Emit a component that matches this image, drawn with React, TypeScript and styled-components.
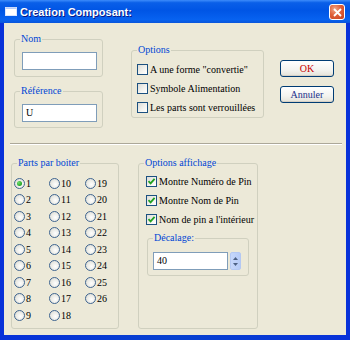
import React from "react";
import styled, { createGlobalStyle } from "styled-components";

const Global = createGlobalStyle`
  html, body { margin: 0; padding: 0; background: #ffffff; }
  * { box-sizing: border-box; }
`;

const Window = styled.div`
  width: 350px;
  height: 340px;
  display: flex;
  flex-direction: column;
  background: linear-gradient(to right, #0831d9, #0842d0 50%, #0831d9);
  overflow: hidden;
`;

const TitleBar = styled.div`
  height: 23px;
  flex: none;
  display: flex;
  align-items: center;
  padding: 0 5px 0 5px;
  background: linear-gradient(
    to bottom,
    #3d8cfb 0%,
    #0a5fe8 12%,
    #0055e5 45%,
    #0762f0 85%,
    #0a55da 100%
  );
`;

const TitleText = styled.span`
  margin-left: 3px;
  font-family: "Liberation Sans", Arial, sans-serif;
  font-weight: bold;
  font-size: 11px;
  color: #ffffff;
  text-shadow: 1px 1px 0 #0a1883;
  flex: 1;
`;

const CloseButton = styled.div`
  width: 16px;
  height: 16px;
  margin-top: 1px;
  border: 1px solid #ffffff;
  border-radius: 3px;
  background: radial-gradient(circle at 35% 30%, #f0a88a 0%, #e0603a 45%, #c4401e 100%);
  display: flex;
  align-items: center;
  justify-content: center;
`;

const Content = styled.div`
  flex: 1;
  margin: 0 4px 5px 4px;
  background: #ece9d8;
  font-family: "Liberation Serif", "Times New Roman", serif;
  font-size: 10px;
  color: #000000;
`;

const TopRow = styled.div`
  display: flex;
  align-items: flex-start;
  padding: 16px 0 0 10px;
`;

const Column = styled.div<{ $gap: number; $ml?: number; $mt?: number }>`
  display: flex;
  flex-direction: column;
  gap: ${(p) => p.$gap}px;
  margin-left: ${(p) => p.$ml ?? 0}px;
  margin-top: ${(p) => p.$mt ?? 0}px;
`;

const Group = styled.div<{ $w: number; $h: number; $pad: string; $ml?: number; $mt?: number }>`
  position: relative;
  width: ${(p) => p.$w}px;
  height: ${(p) => p.$h}px;
  padding: ${(p) => p.$pad};
  margin-left: ${(p) => p.$ml ?? 0}px;
  margin-top: ${(p) => p.$mt ?? 0}px;
  border: 1px solid #d0d0bf;
  border-radius: 3px;
  flex: none;
`;

const GroupLabel = styled.span`
  position: absolute;
  top: -7px;
  left: 5px;
  padding: 0 1px;
  line-height: 12px;
  background: #ece9d8;
  color: #0046d5;
  white-space: nowrap;
`;

const TextField = styled.div<{ $w: number }>`
  width: ${(p) => p.$w}px;
  height: 18px;
  border: 1px solid #7f9db9;
  background: #ffffff;
  padding: 2px 0 0 3px;
  line-height: 12px;
`;

const CheckRow = styled.div`
  display: flex;
  align-items: center;
  gap: 2px;
  height: 19px;
  white-space: nowrap;
`;

const Box = styled.div`
  width: 11px;
  height: 11px;
  border: 1px solid #1c5180;
  background: linear-gradient(135deg, #dcdcd7 0%, #f4f4f0 60%, #ffffff 100%);
  display: flex;
  align-items: center;
  justify-content: center;
  flex: none;
`;

const Button = styled.div<{ $color: string }>`
  width: 54px;
  height: 17px;
  border: 1px solid #003c74;
  border-radius: 3px;
  background: linear-gradient(to bottom, #ffffff 0%, #f3f3ef 60%, #e4e2d8 100%);
  box-shadow: inset 0 -1px 0 #d6d0c5;
  color: ${(p) => p.$color};
  display: flex;
  align-items: center;
  justify-content: center;
`;

const Separator = styled.div`
  height: 2px;
  margin: 15px 4px 0 6px;
  border-top: 1px solid #aca899;
  border-bottom: 1px solid #ffffff;
`;

const BottomRow = styled.div`
  display: flex;
  align-items: flex-start;
  padding: 18px 0 0 7px;
`;

const RadioGrid = styled.div`
  display: grid;
  grid-template-columns: 35px 36px 36px;
  grid-template-rows: repeat(9, 16.5px);
  grid-auto-flow: column;
`;

const RadioItem = styled.div`
  display: flex;
  align-items: center;
  gap: 1px;
`;

const Radio = styled.div<{ $on: boolean }>`
  width: 11px;
  height: 11px;
  border-radius: 50%;
  border: 1px solid #3f6591;
  background: radial-gradient(circle at 60% 60%, #ffffff 0%, #e8e8e2 60%, #d2d2ca 100%);
  display: flex;
  align-items: center;
  justify-content: center;
  flex: none;
  &::after {
    content: "";
    display: ${(p) => (p.$on ? "block" : "none")};
    width: 5px;
    height: 5px;
    border-radius: 50%;
    background: radial-gradient(circle at 35% 35%, #6ee06e, #21a121 70%);
  }
`;

const SpinRow = styled.div`
  display: flex;
  gap: 2px;
`;

const Spin = styled.div`
  width: 11px;
  height: 18px;
  border-radius: 2px;
  background: linear-gradient(to right, #c6d7fb, #b6cbf7);
  border: 1px solid #b4c8f3;
  display: flex;
  flex-direction: column;
  align-items: center;
  justify-content: space-around;
  padding: 2px 0;
`;

const Tick = () => (
  <svg width="9" height="9" viewBox="0 0 9 9">
    <path d="M1.5 4.2 L3.6 6.4 L7.6 1.8" fill="none" stroke="#21a121" strokeWidth="1.8" />
  </svg>
);

const Check = ({ on, label }: { on?: boolean; label: string }) => (
  <CheckRow>
    <Box>{on && <Tick />}</Box>
    <span>{label}</span>
  </CheckRow>
);

const Arrow = ({ up }: { up?: boolean }) => (
  <svg width="5" height="3" viewBox="0 0 5 3">
    <path d={up ? "M0 3 L2.5 0 L5 3Z" : "M0 0 L2.5 3 L5 0Z"} fill="#4d6185" />
  </svg>
);

const parts = Array.from({ length: 26 }, (_, i) => i + 1);

export default function App() {
  return (
    <>
      <Global />
      <Window>
        <TitleBar>
          <svg width="12" height="9" viewBox="0 0 12 9">
            <rect x="0.5" y="0.5" width="11" height="8" fill="#ffffff" stroke="#dbe6ff" />
            <rect x="0.5" y="0.5" width="11" height="1.5" fill="#b9cdf8" />
          </svg>
          <TitleText>Creation Composant:</TitleText>
          <CloseButton>
            <svg width="9" height="9" viewBox="0 0 9 9">
              <path d="M1 1 L8 8 M8 1 L1 8" stroke="#ffffff" strokeWidth="1.8" />
            </svg>
          </CloseButton>
        </TitleBar>
        <Content>
          <TopRow>
            <Column $gap={14}>
              <Group $w={89} $h={38} $pad="12px 0 0 7px">
                <GroupLabel>Nom</GroupLabel>
                <TextField $w={75} />
              </Group>
              <Group $w={89} $h={37} $pad="12px 0 0 7px">
                <GroupLabel>Référence</GroupLabel>
                <TextField $w={75}>U</TextField>
              </Group>
            </Column>
            <Group $w={133} $h={68} $pad="9px 0 0 5px" $ml={28} $mt={11}>
              <GroupLabel>Options</GroupLabel>
              <Check label={'A une forme "convertie"'} />
              <Check label="Symbole Alimentation" />
              <Check label="Les parts sont verrouillées" />
            </Group>
            <Column $gap={9} $ml={16} $mt={21}>
              <Button $color="#c80000">OK</Button>
              <Button $color="#1a2f8a">Annuler</Button>
            </Column>
          </TopRow>
          <Separator />
          <BottomRow>
            <Group $w={108} $h={166} $pad="11px 0 0 2px">
              <GroupLabel>Parts par boiter</GroupLabel>
              <RadioGrid>
                {parts.map((n) => (
                  <RadioItem key={n}>
                    <Radio $on={n === 1} />
                    <span>{n}</span>
                  </RadioItem>
                ))}
              </RadioGrid>
            </Group>
            <Group $w={120} $h={166} $pad="8px 0 0 7px" $ml={19}>
              <GroupLabel>Options affichage</GroupLabel>
              <Check on label="Montre Numéro de Pin" />
              <Check on label="Montre Nom de Pin" />
              <Check on label="Nom de pin a l'intérieur" />
              <Group $w={102} $h={38} $pad="13px 0 0 5px" $ml={1} $mt={9}>
                <GroupLabel>Décalage:</GroupLabel>
                <SpinRow>
                  <TextField $w={75}>40</TextField>
                  <Spin>
                    <Arrow up />
                    <Arrow />
                  </Spin>
                </SpinRow>
              </Group>
            </Group>
          </BottomRow>
        </Content>
      </Window>
    </>
  );
}
